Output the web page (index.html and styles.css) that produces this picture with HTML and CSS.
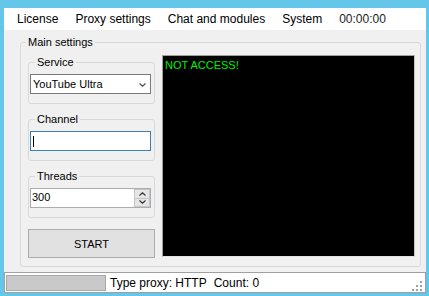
FILE: index.html
```html
<!DOCTYPE html>
<html>
<head>
  <title>Main settings</title>
  <link rel="stylesheet" href="styles.css">
</head>
<body>
  <div class="window">
    <div class="menubar">
      <span class="menu-item">License</span>
      <span class="menu-item">Proxy settings</span>
      <span class="menu-item">Chat and modules</span>
      <span class="menu-item">System</span>
      <span class="menu-item clock">00:00:00</span>
    </div>
    <div class="client">
      <div class="group main-group">
        <span class="group-title">Main settings</span>
        <div class="main-body">
          <div class="left-col">
            <div class="group">
              <span class="group-title">Service</span>
              <div class="field select">
                <span class="field-text">YouTube Ultra</span>
                <svg class="chevron" width="7" height="4" viewBox="0 0 7 4"><polyline points="0.5,0.5 3.5,3.2 6.5,0.5" fill="none" stroke="#555" stroke-width="1.3"/></svg>
              </div>
            </div>
            <div class="group">
              <span class="group-title">Channel</span>
              <div class="field textbox focused"><span class="caret"></span></div>
            </div>
            <div class="group">
              <span class="group-title">Threads</span>
              <div class="field numeric">
                <span class="field-text">300</span>
                <div class="spin">
                  <span class="spin-btn"><svg width="7" height="4" viewBox="0 0 7 4"><polyline points="0.5,3.5 3.5,0.8 6.5,3.5" fill="none" stroke="#333" stroke-width="1.2"/></svg></span>
                  <span class="spin-btn"><svg width="7" height="4" viewBox="0 0 7 4"><polyline points="0.5,0.5 3.5,3.2 6.5,0.5" fill="none" stroke="#333" stroke-width="1.2"/></svg></span>
                </div>
              </div>
            </div>
            <button class="start-btn">START</button>
          </div>
          <div class="console">NOT ACCESS!</div>
        </div>
      </div>
    </div>
    <div class="statusbar">
      <div class="progress"></div>
      <span class="status-label">Type proxy: HTTP</span>
      <span class="status-label">Count: 0</span>
      <svg class="grip" width="11" height="11" viewBox="0 0 11 11" fill="#a0a0a0">
        <rect x="8" y="0" width="2" height="2"/>
        <rect x="4" y="4" width="2" height="2"/>
        <rect x="8" y="4" width="2" height="2"/>
        <rect x="0" y="8" width="2" height="2"/>
        <rect x="4" y="8" width="2" height="2"/>
        <rect x="8" y="8" width="2" height="2"/>
      </svg>
    </div>
  </div>
</body>
</html>
```

FILE: styles.css
```css
html, body {
  margin: 0;
  height: 296px;
  overflow: hidden;
}

body {
  background-color: #64c7e9;
  font-family: "Liberation Sans", Arial, sans-serif;
  font-size: 11px;
  color: #000;
}

.window {
  margin: 8px 3px 0 4px;
  height: 285px;
  display: flex;
  flex-direction: column;
  background-color: #f0f0f0;
}

.menubar {
  height: 22px;
  flex: none;
  display: flex;
  align-items: center;
  gap: 17px;
  padding-left: 13px;
  background-color: #fff;
  font-size: 12px;
  line-height: 22px;
}

.clock {
  color: #222;
}

.client {
  flex: 1;
  padding: 12px 5px 0 16px;
}

.group {
  border: 1px solid #d9d9d9;
  border-radius: 3px;
}

.group-title {
  display: block;
  width: max-content;
  margin: -8px 0 5px 6px;
  padding: 0 2px;
  background-color: #f0f0f0;
  line-height: 14px;
}

.main-group .group-title {
  margin-bottom: 6px;
}

.main-group > .group-title {
  margin-left: 5px;
}

.main-body {
  display: flex;
  align-items: flex-start;
  gap: 7px;
  padding: 0 5px 8px 7px;
}

.left-col {
  width: 127px;
  display: flex;
  flex-direction: column;
  gap: 15px;
  padding-top: 7px;
}

.left-col .group {
  padding: 0 3px 9px 1px;
}

.left-col .group-title {
  margin: -8px 0 5px 5px;
}

.field {
  height: 20px;
  box-sizing: border-box;
  border: 1px solid #7a7a7a;
  background-color: #fff;
  display: flex;
  align-items: center;
}

.field-text {
  padding-left: 2px;
  line-height: 18px;
}

.select {
  justify-content: space-between;
  padding-right: 4px;
}

.chevron {
  margin-top: 1px;
}

.textbox.focused {
  border-color: #3c7fb1;
}

.caret {
  width: 1px;
  height: 11px;
  margin-left: 2px;
  background-color: #000;
}

.numeric {
  border-color: #abadb3;
  justify-content: space-between;
  padding-right: 0;
}

.numeric .field-text {
  padding-left: 1px;
  padding-bottom: 2px;
}

.spin {
  width: 16px;
  height: 18px;
  display: flex;
  flex-direction: column;
}

.spin-btn {
  flex: 1;
  display: flex;
  align-items: center;
  justify-content: center;
  background-color: #e5e5e5;
  border: 1px solid #c6c6c6;
}

.spin-btn + .spin-btn {
  border-top: none;
}

.start-btn {
  margin-top: -4px;
  height: 29px;
  padding: 0;
  background-color: #e1e1e1;
  border: 1px solid #adadad;
  font-family: "Liberation Sans", Arial, sans-serif;
  font-size: 11px;
  color: #000;
}

.console {
  flex: 1;
  height: 202px;
  box-sizing: border-box;
  padding: 3px 2px;
  background-color: #000;
  border: 1px solid #a0a0a0;
  border-right-color: #c8c8c8;
  border-bottom-color: #e3e3e3;
  color: #00f000;
  line-height: 13px;
}

.statusbar {
  height: 21px;
  flex: none;
  box-sizing: border-box;
  display: flex;
  align-items: flex-start;
  border: 1px solid #a0a0a0;
  background-color: #fff;
  font-size: 12px;
}

.progress {
  width: 100px;
  height: 16px;
  box-sizing: border-box;
  margin: 2px 4px 0 1px;
  background-color: #c9c9c9;
  border: 1px solid #a8a8a8;
}

.status-label {
  line-height: 20px;
  margin-right: 7px;
}

.grip {
  margin-left: auto;
  margin-top: 8px;
  margin-right: 2px;
}
```
